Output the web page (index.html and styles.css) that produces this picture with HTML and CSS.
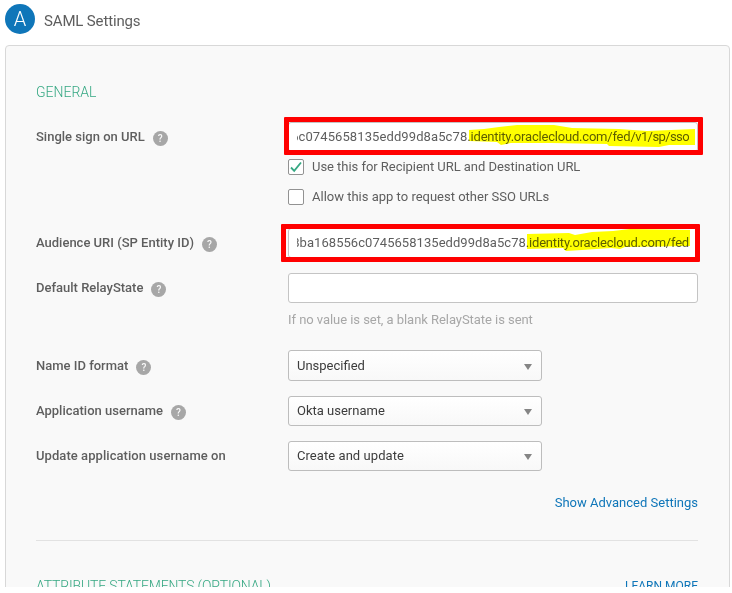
FILE: index.html
```html
<!DOCTYPE html>
<html lang="en">
<head>
<meta charset="utf-8">
<title>SAML Settings</title>
<link rel="stylesheet" href="styles.css">
</head>
<body>
<div class="page">
  <header class="head">
    <span class="step">A</span>
    <h1 class="title">SAML Settings</h1>
  </header>
  <main class="panel">
    <h2 class="section general">GENERAL</h2>
    <div class="row row-sso">
      <div class="label"><span>Single sign on URL</span><i class="help">?</i></div>
      <div class="field">
        <div class="input"><div class="clip"><span class="hash-sso">6c0745658135edd99d8a5c78</span><span class="domain">.identity.oraclecloud.com/fed</span><span class="path">/v1/sp/sso</span></div></div>
        <svg class="marker marker-1" width="228" height="24" viewBox="0 0 228 24"><path d="M0 5 15 4 30 2 48 0 85 0 103 3 150 4 178 6 226 4 226 20 200 20 190 22 140 21 138 19 82 18 42 18 32 20 28 17 0 16Z" fill="#ff0"/></svg>
        <div class="frame frame-1"></div>
        <div class="check"><span class="box"><svg width="14" height="14" viewBox="0 0 14 14"><path d="M2 7.5 5.2 10.8 12 2.5" fill="none" stroke="#36a883" stroke-width="1.8"/></svg></span><span class="recipient">Use this for Recipient URL and Destination URL</span></div>
        <div class="check"><span class="box"></span><span>Allow this app to request other SSO URLs</span></div>
      </div>
    </div>
    <div class="row">
      <div class="label"><span>Audience URI (SP Entity ID)</span><i class="help">?</i></div>
      <div class="field">
        <div class="input"><div class="clip"><span class="hash-audience">8ba168556c0745658135edd99d8a5c78</span><span class="domain">.identity.oraclecloud.com/fed</span></div></div>
        <svg class="marker marker-2" width="164" height="24" viewBox="0 0 164 24"><path d="M0 5 42 4 48 6 65 3 86 2 103 0 163 1 163 17 98 18 93 20 84 19 55 21 39 22 36 19 0 20Z" fill="#ff0"/></svg>
        <div class="frame frame-2"></div>
      </div>
    </div>
    <div class="row row-relay">
      <div class="label"><span>Default RelayState</span><i class="help">?</i></div>
      <div class="field"><div class="input"></div><p class="hint">If no value is set, a blank RelayState is sent</p></div>
    </div>
    <div class="row row-name">
      <div class="label"><span>Name ID format</span><i class="help">?</i></div>
      <div class="select"><span>Unspecified</span><b class="arrow"></b></div>
    </div>
    <div class="row">
      <div class="label"><span>Application username</span><i class="help">?</i></div>
      <div class="select"><span>Okta username</span><b class="arrow"></b></div>
    </div>
    <div class="row">
      <div class="label"><span class="update">Update application username on</span></div>
      <div class="select"><span class="update">Create and update</span><b class="arrow"></b></div>
    </div>
    <div class="advanced"><a>Show Advanced Settings</a></div>
    <div class="foot"><h2 class="section attributes">ATTRIBUTE STATEMENTS (OPTIONAL)</h2><a class="learn">LEARN MORE</a></div>
  </main>
</div>
</body>
</html>
```
FILE: styles.css
```css
* { box-sizing: border-box; }
body { margin: 0; background: #fff; color: #5e5e5e; font: 13px/20px Roboto, "Liberation Sans", sans-serif; }
.page { width: 732px; height: 587px; overflow: hidden; }
.head { display: flex; align-items: center; height: 45px; padding: 0 5px 7px; gap: 9px; }
.step { width: 30px; height: 30px; border-radius: 50%; background: #0f76b9; color: #fff; font-size: 20px; font-weight: 300; line-height: 31px; text-align: center; }
.title { margin: 4px 0 0; font-size: 15px; font-weight: 400; letter-spacing: -0.15px; }
.panel { width: 725px; height: 620px; margin-left: 5px; padding: 36px 31px 0 30px; border: 1px solid #d8d8d8; border-radius: 4px; background: #f9f9f9; }
.section { margin: 0; font-size: 14px; line-height: 20px; font-weight: 300; color: #36a883; }
.general { margin-bottom: 20px; }
.attributes { letter-spacing: -0.16px; }
.row { display: grid; grid-template-columns: 252px minmax(0, 1fr); align-items: start; height: 45px; }
.row-sso { height: 106px; }
.row-relay { height: 77px; }
.row-name { height: 46px; }
.label { display: flex; align-items: center; height: 30px; font-weight: 500; white-space: nowrap; }
.row-name .label { height: 32px; }
.help { width: 15px; height: 15px; margin: 2px 0 0 8px; border-radius: 50%; background: #a7a7a7; color: #f9f9f9; font: 500 10px/15px Roboto, sans-serif; text-align: center; }
.field { position: relative; }
.input { height: 30px; padding: 0 8px; border: 1px solid #c4c4c4; border-radius: 3px; background: #fff; }
.clip { display: flex; justify-content: flex-end; overflow: hidden; line-height: 28px; white-space: nowrap; }
.hash-sso { letter-spacing: 0.1px; }
.hash-audience { letter-spacing: 0.05px; }
.domain { letter-spacing: -0.2px; }
.path { letter-spacing: -0.6px; }
.recipient { letter-spacing: -0.04px; }
.update { letter-spacing: 0.06px; }
.marker { position: absolute; mix-blend-mode: multiply; }
.marker-1 { left: 181px; top: 3px; }
.marker-2 { left: 239px; top: 1px; }
.frame { position: absolute; width: 419px; height: 38px; border: 5px solid #f00; border-radius: 1px; }
.frame-1 { left: -4px; top: -5px; }
.frame-2 { left: -7px; top: -4px; }
.check { display: flex; align-items: center; gap: 8px; height: 30px; }
.box { width: 16px; height: 16px; border: 1px solid #929292; border-radius: 2px; background: #fff; }
.box svg { display: block; }
.hint { margin: 7px 0 0; color: #a7a7a7; letter-spacing: -0.05px; }
.select { display: flex; align-items: center; justify-content: space-between; width: 254px; height: 30px; padding: 0 9px 0 8px; border: 1px solid #bdbdbd; border-radius: 3px; background: linear-gradient(#fff, #f8f8f8); color: #3c3c3c; }
.row-name .select { height: 31px; padding-top: 1px; }
.arrow { margin-top: 1px; border: 4px solid transparent; border-top: 6px solid #858585; border-bottom: 0; }
.advanced { display: flex; justify-content: flex-end; height: 55px; padding-top: 7px; border-bottom: 1px solid #e2e2e2; }
a { color: #0f76b9; }
.foot { display: flex; justify-content: space-between; padding-top: 35px; }
.learn { font-size: 12px; }
```
